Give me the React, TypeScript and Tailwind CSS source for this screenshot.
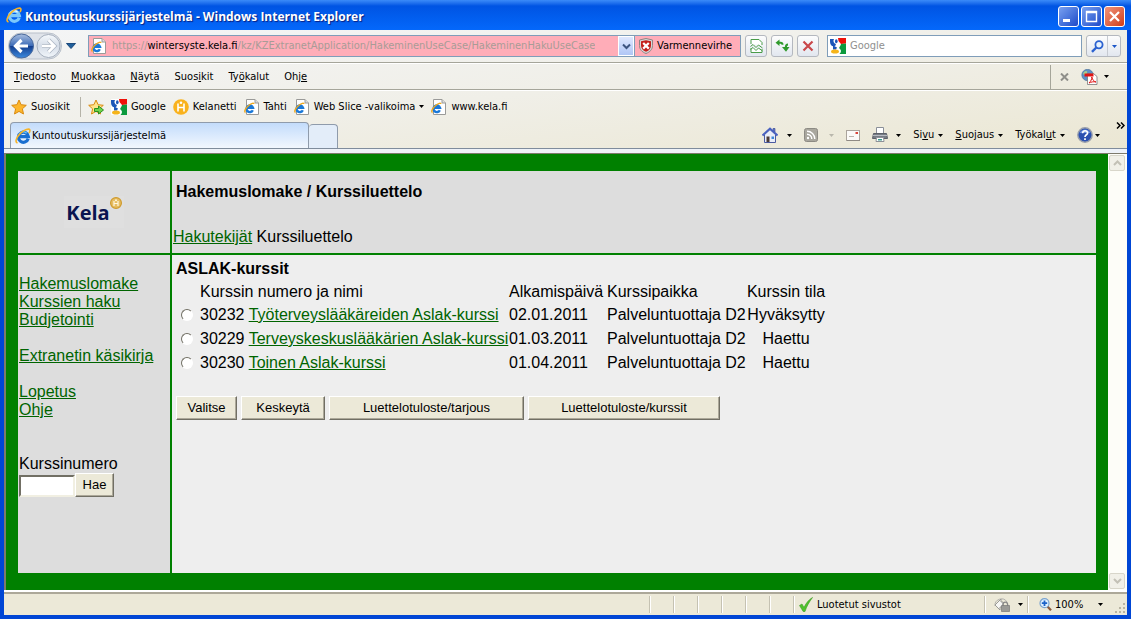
import type { ReactNode } from "react";

const LABEL = "font-['DejaVu_Sans_Condensed','DejaVu_Sans',sans-serif] text-[11px] leading-4 text-black";

function IeMark({ light = false }: { light?: boolean }) {
  return (
    <svg width="16" height="16" viewBox="0 0 16 16" className="shrink-0" aria-hidden="true">
      <path d="M13.200 10.800A5 5 0 1 1 13.400 8.600H4.600" fill="none" stroke={light ? "#7cc8fb" : "#1a6fd0"} strokeWidth="3.200" />
      <path d="M4 6.600a4.600 4.600 0 0 1 7.600-1.400" fill="none" stroke={light ? "#e6f6ff" : "#6cc4f5"} strokeWidth="1.300" />
      <path d="M2.600 14.800C-.6 14.400 1.600 9 5.600 5.200 9.400 1.700 14 .2 14.800 1.800c.4.800 0 2-.8 3.300" fill="none" stroke="#f6b42a" strokeWidth="1.600" />
    </svg>
  );
}

function IePage() {
  return (
    <svg width="16" height="16" viewBox="0 0 16 16" className="shrink-0" aria-hidden="true">
      <path d="M2.500.5h8.500l3.500 3.500v11.500h-12z" fill="#fff" stroke="#9a9a98" />
      <path d="M11 .5V4h3.500" fill="#ddd" stroke="#9a9a98" />
      <path d="M8.800 11.200A3.300 3.300 0 1 1 9 8.900H3" fill="none" stroke="#1a78d8" strokeWidth="2.400" />
      <path d="M1.500 13.500C-.5 12.500 2 8.500 5 6.200 7.500 4.300 9.800 3.600 10 5" fill="none" stroke="#f0a81c" strokeWidth="1.400" />
    </svg>
  );
}

function GoogleMark() {
  return (
    <svg width="16" height="16" viewBox="0 0 16 16" className="shrink-0" aria-hidden="true">
      <rect width="16" height="16" rx="1" fill="#fff" />
      <path d="M8 0h8v5.500l-5 .5-2.500-3z" fill="#ee1008" />
      <path d="M11 6l5-.5V16H9.500c2-2 2-4 0-5.500-1-1 1-2 1.500-4.500z" fill="#0c9a3e" />
      <path d="M0 1h4C2.800 3 3.500 5.500 6 6L5 8.500 2 8C.5 7 0 5 0 3z" fill="#1c56b8" />
      <path d="M3 7.500 7 9.500 6 11.500H3z" fill="#1c56b8" />
      <ellipse cx="6.300" cy="3.300" rx="1.300" ry="2" fill="#1c56b8" />
      <ellipse cx="5" cy="13.500" rx="4" ry="2.100" fill="#f5b41a" />
    </svg>
  );
}

function Star({ add = false }: { add?: boolean }) {
  return (
    <svg width="16" height="16" viewBox="0 0 16 16" className="shrink-0" aria-hidden="true">
      <path d="M8 1l2.100 4.700 5.200.6-3.900 3.500 1.100 5.200L8 12.400 3.500 15l1.100-5.200L.7 6.300l5.200-.6z" fill={add ? "#ffe48a" : "#fdb62c"} stroke="#d98a10" />
      {add && <path d="M6.500 9.500h4V7l5 4-5 4v-2.500h-4z" fill="#6fd44c" stroke="#2c8f1e" />}
    </svg>
  );
}

function KelaBadge() {
  return (
    <svg width="16" height="16" viewBox="0 0 16 16" className="shrink-0" aria-hidden="true">
      <circle cx="8" cy="8" r="7.800" fill="#f9b21d" />
      <circle cx="8" cy="3.800" r="1.300" fill="#fff" />
      <path d="M5 4.500v8M11 4.500v8M5 8.500h6" stroke="#fff" strokeWidth="1.600" fill="none" />
    </svg>
  );
}

function Caret({ className = "text-black" }: { className?: string }) {
  return (
    <svg width="5" height="3" viewBox="0 0 5 3" className={`shrink-0 ${className}`} aria-hidden="true">
      <path d="M0 0h5L2.500 3z" fill="currentColor" />
    </svg>
  );
}

function HomeIcon() {
  return (
    <svg width="16" height="16" viewBox="0 0 16 16" className="shrink-0" aria-hidden="true">
      <path d="M11 1.500h2V5h-2z" fill="#6d7fc4" stroke="#2b3e92" strokeWidth=".6" />
      <path d="M2.500 7.500 8 2.500l5.500 5v8h-11z" fill="#e9edf8" stroke="#4a5aa0" />
      <path d="M.5 8.500 8 1.500l7.500 7" fill="none" stroke="#4a62c0" strokeWidth="2" />
      <path d="M4.500 9.500h3V15h-3z" fill="#4a3a36" />
      <path d="M9.500 9.500h2.500V12H9.500z" fill="#3d86d8" />
    </svg>
  );
}

function FeedIcon() {
  return (
    <svg width="14" height="14" viewBox="0 0 14 14" className="shrink-0" aria-hidden="true">
      <rect x=".5" y=".5" width="13" height="13" rx="2" fill="#a9a79e" stroke="#8d8b84" />
      <circle cx="4" cy="10" r="1.200" fill="#fff" />
      <path d="M3 6.200A4.800 4.800 0 0 1 7.800 11M3 3.200A7.800 7.800 0 0 1 10.800 11" fill="none" stroke="#fff" strokeWidth="1.400" />
    </svg>
  );
}

function MailIcon() {
  return (
    <svg width="14" height="11" viewBox="0 0 14 11" className="shrink-0" aria-hidden="true">
      <rect x=".5" y=".5" width="13" height="10" fill="#fbfaf8" stroke="#aaa49c" />
      <path d="M9.500 2h2.500v2H9.500z" fill="#d8453a" />
      <path d="M3 6.500h5" stroke="#b9b4ac" />
      <path d="M1 10.500h13" stroke="#8f8a84" />
    </svg>
  );
}

function PrinterIcon() {
  return (
    <svg width="16" height="16" viewBox="0 0 16 16" className="shrink-0" aria-hidden="true">
      <path d="M4.500.5h7V7h-7z" fill="#fff" stroke="#8a8f98" />
      <path d="M1.500 6.500h13l1 5H.5z" fill="#777c85" stroke="#5c6068" />
      <path d="M1 8.500h14" stroke="#b7bbc2" />
      <path d="M4.500 10.500h7l.5 4H4z" fill="#fff" stroke="#8d9198" />
      <path d="M6 12h4v1.500H6z" fill="#3a9a8c" />
    </svg>
  );
}

function HelpIcon() {
  return (
    <svg width="16" height="16" viewBox="0 0 16 16" className="shrink-0" aria-hidden="true">
      <circle cx="8" cy="8" r="7.200" fill="#2b50b0" stroke="#9aa0ac" strokeWidth="1.400" />
      <path d="M2.500 6a6 6 0 0 1 11 0z" fill="#6d90dd" />
      <path d="M5.600 6.300c0-3.400 5-3.200 5-.4C10.600 7.800 8 7.700 8 10M8 11.200v1.800" fill="none" stroke="#fff" strokeWidth="1.700" />
    </svg>
  );
}

function PdfIcon() {
  return (
    <svg width="17" height="16" viewBox="0 0 17 16" className="shrink-0" aria-hidden="true">
      <circle cx="6.500" cy="6" r="5.700" fill="#5f90c4" stroke="#436a94" strokeWidth=".6" />
      <path d="M3 3c2-2 4-1 3 1S3 6 2 5z" fill="#a7d08b" />
      <path d="M6.500 4.500h6l3.500 3v8H6.500z" fill="#fff" stroke="#777" strokeWidth=".8" />
      <path d="M3.500 4.500h9v3h-9z" fill="#e01414" />
      <path d="M8 14c2-2 3-4 2.800-6 .8 3 2.200 4.500 4.200 5-2.500-.6-5 0-7 1z" fill="none" stroke="#e01414" />
    </svg>
  );
}

function Shield() {
  return (
    <svg width="14" height="16" viewBox="0 0 14 16" className="shrink-0" aria-hidden="true">
      <path d="M7 .5 13.500 2v5.500c0 4-2.500 6.500-6.500 8-4-1.500-6.500-4-6.500-8V2z" fill="#d8d8d8" stroke="#8f8583" />
      <path d="M7 2.200 12 3.300v4.200c0 3-1.800 5-5 6.300-3.200-1.300-5-3.300-5-6.300V3.300z" fill="#c4201c" />
      <path d="m4.200 5 5.600 5.600m0-5.600L4.200 10.600" stroke="#fff" strokeWidth="2.200" />
    </svg>
  );
}

function NavButtons() {
  return (
    <div className="relative flex h-7 w-[54px] shrink-0 items-center">
      <svg width="54" height="28" viewBox="0 0 54 28" className="absolute inset-0" aria-hidden="true">
        <defs>
          <linearGradient id="back" x2="0" y2="1">
            <stop offset="0" stopColor="#a9bedf" />
            <stop offset=".48" stopColor="#3f6db8" />
            <stop offset=".52" stopColor="#153f8f" />
            <stop offset="1" stopColor="#3c8be0" />
          </linearGradient>
          <linearGradient id="fwd" x2="0" y2="1">
            <stop offset="0" stopColor="#f6f9fc" />
            <stop offset=".5" stopColor="#d5dde8" />
            <stop offset="1" stopColor="#f2f6fa" />
          </linearGradient>
        </defs>
        <rect x=".5" y="1" width="53" height="26" rx="13" fill="#dfe3e9" stroke="#b9c0ca" />
        <circle cx="13.500" cy="14" r="12" fill="url(#back)" stroke="#4a6a9c" />
        <path d="M13.500 8 7.500 14l6 6M8 14h12" fill="none" stroke="#fff" strokeWidth="3.200" />
        <circle cx="40.500" cy="14" r="11.500" fill="url(#fwd)" stroke="#a4aebc" />
        <path d="m40.500 8 6 6-6 6M46 14H34" fill="none" stroke="#aab4c2" strokeWidth="4" />
        <path d="m40.500 8 6 6-6 6M46 14H34" fill="none" stroke="#fff" strokeWidth="2.600" />
      </svg>
      <button type="button" aria-label="Takaisin" className="relative h-7 w-[27px]" />
      <button type="button" aria-label="Eteenpäin" className="relative h-7 w-[27px]" />
    </div>
  );
}

function ToolButton({ label, children }: { label: string; children: ReactNode }) {
  return (
    <button
      type="button"
      aria-label={label}
      className="flex h-[22px] w-[22px] shrink-0 items-center justify-center rounded-[3px] border border-[#b4b8bf] bg-linear-to-b from-[#fdfdfd] to-[#e2e7ef]"
    >
      {children}
    </button>
  );
}

function TitleBar() {
  const base = "flex h-[21px] w-[21px] items-center justify-center rounded-[3px] border border-white";
  return (
    <header className="flex h-[30px] shrink-0 items-center gap-[3px] bg-linear-to-b from-[#3b8bf8] via-[#0054e3] via-20% to-[#0468fb] px-[6px]">
      <IeMark light />
      <h1 className="flex-1 truncate pt-1 font-['Open_Sans',sans-serif] text-[12px] leading-5 font-bold text-white [text-shadow:1px_1px_1px_#0a1f80]">
        Kuntoutuskurssijärjestelmä - Windows Internet Explorer
      </h1>
      <div className="flex shrink-0 gap-[2px] pt-[2px]">
        <button type="button" aria-label="Pienennä" className={`${base} bg-linear-to-br from-[#7aa0f0] to-[#1f48c8]`}>
          <svg width="13" height="13" viewBox="0 0 13 13"><path d="M1 9h7v3H1z" fill="#fff" /></svg>
        </button>
        <button type="button" aria-label="Suurenna" className={`${base} bg-linear-to-br from-[#7aa0f0] to-[#1f48c8]`}>
          <svg width="13" height="13" viewBox="0 0 13 13"><path d="M1.500 1.500h10v10h-10zM1 2.500h11" fill="none" stroke="#fff" strokeWidth="1.400" /></svg>
        </button>
        <button type="button" aria-label="Sulje" className={`${base} bg-linear-to-br from-[#f0937a] to-[#cf3a10]`}>
          <svg width="13" height="13" viewBox="0 0 13 13"><path d="m2 2 9 9m0-9-9 9" stroke="#fff" strokeWidth="2.200" /></svg>
        </button>
      </div>
    </header>
  );
}

function AddressRow() {
  return (
    <div className="flex h-[33px] items-center gap-1 border-b border-[#a5a59a] pr-[6px] pl-1">
      <NavButtons />
      <button type="button" aria-label="Viimeisimmät sivut" className="mr-2 flex h-5 w-[10px] shrink-0 items-center justify-center">
        <svg width="10" height="6" viewBox="0 0 10 6"><path d="M.5.5h9L5 5.500z" fill="#1f5f9c" stroke="#1d4a7c" /></svg>
      </button>
      <div className="flex h-[22px] min-w-0 flex-1 border border-[#7f9db9] bg-[#ffadb8]">
        <div className="flex min-w-0 flex-1 items-center gap-[5px] pl-[2px]">
          <IePage />
          <div role="textbox" aria-label="Osoite" tabIndex={0} className={`${LABEL} truncate`}>
            <span className="text-[#a89c96]">https://</span>wintersyste.kela.fi
            <span className="text-[#a89c96]">/kz/KZExtranetApplication/HakeminenUseCase/HakeminenHakuUseCase</span>
          </div>
        </div>
        <button type="button" aria-label="Näytä osoitteet" className="flex w-4 shrink-0 items-center justify-center border border-white bg-linear-to-b from-[#dfe8fe] to-[#b0c6f5]">
          <svg width="9" height="7" viewBox="0 0 9 7"><path d="m1 1.500 3.500 3.500L8 1.500" fill="none" stroke="#3d5580" strokeWidth="2" /></svg>
        </button>
        <button type="button" className={`${LABEL} flex w-[106px] shrink-0 items-center gap-1 border-l border-[#7f9db9] pl-1`}>
          <Shield />
          Varmennevirhe
        </button>
      </div>
      <ToolButton label="Yhteensopivuusnäkymä">
        <svg width="13" height="14" viewBox="0 0 13 14">
          <path d="M1 5V.5h8L12 3.500V6M1 9v4.500h11V10" fill="#fff" stroke="#4a9c48" />
          <path d="m.5 7.500 2.500-2 3 3 2.500-2.500 4 3M.5 10.500l2.500-2 3 3 2.500-2.500 4 3" fill="none" stroke="#4a9c48" />
        </svg>
      </ToolButton>
      <ToolButton label="Päivitä">
        <svg width="15" height="14" viewBox="0 0 15 14" fill="none">
          <path d="M4.500.5v6.500L.5 3.800z" fill="#2f9a2c" />
          <path d="M4 3.800h1.500q2 0 2 2" stroke="#2f9a2c" strokeWidth="2" />
          <path d="M7 8h7.500L11 12.800z" fill="#2f9a2c" />
          <path d="M10.800 8.500q0-3 2.200-3" stroke="#2f9a2c" strokeWidth="2" />
        </svg>
      </ToolButton>
      <ToolButton label="Pysäytä">
        <svg width="12" height="12" viewBox="0 0 12 12"><path d="m1.500 1.500 9 9m0-9-9 9" stroke="#c9474a" strokeWidth="2.200" /></svg>
      </ToolButton>
      <label className="ml-1 flex h-[22px] w-[255px] shrink-0 items-center gap-1 border border-[#7f9db9] bg-white pl-[2px]">
        <GoogleMark />
        <input aria-label="Haku" placeholder="Google" className={`${LABEL} min-w-0 flex-1 outline-none placeholder:text-[#8f8f8f]`} />
      </label>
      <div className="flex h-[22px] w-[35px] shrink-0 rounded-[3px] border border-[#b4b8bf] bg-linear-to-b from-[#fdfdfd] to-[#e2e7ef]">
        <button type="button" aria-label="Hae verkosta" className="flex flex-1 items-center justify-center">
          <svg width="13" height="13" viewBox="0 0 13 13"><circle cx="8" cy="4.800" r="3.600" fill="#e6f2ff" stroke="#2c62d0" strokeWidth="1.800" /><path d="M5.300 7.500 1 11.800" stroke="#2c62d0" strokeWidth="2.400" /></svg>
        </button>
        <button type="button" aria-label="Hakuasetukset" className="flex w-[13px] items-center justify-center border-l border-[#c6cad1]">
          <Caret className="text-[#1c56c8]" />
        </button>
      </div>
    </div>
  );
}

const menus: [string, string, string][] = [
  ["", "T", "iedosto"],
  ["", "M", "uokkaa"],
  ["", "N", "äytä"],
  ["Suos", "i", "kit"],
  ["Ty", "ö", "kalut"],
  ["Ohj", "e", ""],
];

function MenuRow() {
  return (
    <div className="flex h-[27px] items-center border-t border-b border-t-white border-b-[#a5a59a] pr-[18px] pl-[10px]">
      <nav className="flex flex-1 gap-[15px]">
        {menus.map(([a, k, b]) => (
          <button type="button" key={a + k + b} className={LABEL}>
            {a}<u>{k}</u>{b}
          </button>
        ))}
      </nav>
      <div className="flex h-6 items-center gap-3 border-l border-[#a5a59a] pl-[9px]">
        <button type="button" aria-label="Sulje työkalurivi">
          <svg width="9" height="8" viewBox="0 0 9 8"><path d="m1 .5 7 7m0-7-7 7" stroke="#8f8f8a" strokeWidth="2" /></svg>
        </button>
        <button type="button" aria-label="Muunna PDF-tiedostoksi" className="flex items-center gap-[6px]">
          <PdfIcon />
          <Caret />
        </button>
      </div>
    </div>
  );
}

function Fav({ icon, children, caret = false }: { icon: ReactNode; children?: ReactNode; caret?: boolean }) {
  return (
    <button type="button" className={`${LABEL} flex shrink-0 items-center gap-1 whitespace-nowrap`}>
      {icon}
      {children}
      {caret && <Caret />}
    </button>
  );
}

function FavoritesRow() {
  return (
    <div className="flex h-8 items-center gap-[7px] border-t border-white pl-[7px]">
      <Fav icon={<Star />}>Suosikit</Fav>
      <div className="ml-[3px] h-5 border-l border-[#b5b3a8]" />
      <button type="button" aria-label="Lisää suosikkeihin"><Star add /></button>
      <Fav icon={<GoogleMark />}>Google</Fav>
      <Fav icon={<KelaBadge />}>Kelanetti</Fav>
      <Fav icon={<IePage />}>Tahti</Fav>
      <Fav icon={<IePage />} caret>Web Slice -valikoima</Fav>
      <Fav icon={<IePage />}>www.kela.fi</Fav>
    </div>
  );
}

function TabRow() {
  const item = `${LABEL} flex items-center gap-1`;
  return (
    <div className="flex h-[27px] items-end border-b border-[#7f8c9c] pl-[6px]">
      <div role="tablist" className="flex items-end">
        <button role="tab" aria-selected="true" type="button" className={`${LABEL} flex h-[26px] w-[299px] items-center gap-px rounded-t border border-b-0 border-[#8f9bab] bg-linear-to-b from-[#c3dcfb] to-[#f2f7fe] pl-1`}>
          <IeMark />
          Kuntoutuskurssijärjestelmä
        </button>
        <button type="button" aria-label="Uusi välilehti" className="h-6 w-[29px] rounded-t border border-b-0 border-l-0 border-[#8f9bab] bg-[#e3edf9]" />
      </div>
      <div className="flex h-full flex-1 items-center justify-end gap-3 pr-[2px]">
        <button type="button" aria-label="Kotisivu" className={`${item} gap-[9px]`}><HomeIcon /><Caret /></button>
        <button type="button" aria-label="Syötteet" className={`${item} gap-[11px]`}><FeedIcon /><Caret className="text-[#b9b7ac]" /></button>
        <button type="button" aria-label="Sähköposti" className={item}><MailIcon /></button>
        <button type="button" aria-label="Tulosta" className={`${item} gap-2`}><PrinterIcon /><Caret /></button>
        <button type="button" className={item}><span>Si<u>v</u>u</span><Caret /></button>
        <button type="button" className={item}><span><u>S</u>uojaus</span><Caret /></button>
        <button type="button" className={item}><span>Työkal<u>u</u>t</span><Caret /></button>
        <button type="button" aria-label="Ohje" className={`${item} gap-[2px]`}><HelpIcon /><Caret /></button>
        <button type="button" aria-label="Lisää" className="ml-1 self-start">
          <svg width="9" height="7" viewBox="0 0 9 7"><path d="m1 .5 3 3-3 3M5 .5l3 3-3 3" fill="none" stroke="#000" strokeWidth="1.500" /></svg>
        </button>
      </div>
    </div>
  );
}

function FormButton({ className, children }: { className: string; children: ReactNode }) {
  return (
    <button
      type="button"
      className={`h-6 shrink-0 border border-t-white border-r-[#716f64] border-b-[#716f64] border-l-white bg-[#ece9d8] text-[13px] leading-4 shadow-[inset_-1px_-1px_0_#aca899] ${className}`}
    >
      {children}
    </button>
  );
}

const link = "text-[#006400] underline";

function KelaLogo() {
  return (
    <div className="flex h-8 w-[60px] items-start justify-center bg-[#dfdfdf]">
      <span className="pt-[3px] font-['Open_Sans',sans-serif] text-[20px] leading-7 font-bold text-[#0a1450]">Kela</span>
      <svg width="12" height="12" viewBox="0 0 12 12" className="mt-px shrink-0" aria-hidden="true">
        <circle cx="6" cy="6" r="5.400" fill="#e6bd62" stroke="#cf9a2c" strokeWidth="1.200" />
        <circle cx="6" cy="3.200" r="1" fill="#fff6dc" />
        <path d="M4 4v5M8 4v5M4 6.500h4" stroke="#fff6dc" strokeWidth="1.200" />
      </svg>
    </div>
  );
}

function Sidebar() {
  return (
    <aside className="bg-[#dddddd] px-px pt-5 leading-[18px]">
      <nav className="flex flex-col items-start">
        <a href="#hakemuslomake" className={link}>Hakemuslomake</a>
        <a href="#haku" className={link}>Kurssien haku</a>
        <a href="#budjetointi" className={link}>Budjetointi</a>
        <a href="#kasikirja" className={`${link} my-[18px]`}>Extranetin käsikirja</a>
        <a href="#lopetus" className={link}>Lopetus</a>
        <a href="#ohje" className={link}>Ohje</a>
      </nav>
      <form className="mt-9">
        <label htmlFor="kurssinumero" className="block">Kurssinumero</label>
        <div className="flex items-end">
          <input
            id="kurssinumero"
            className="h-[22px] w-14 border-2 border-t-[#716f64] border-r-[#f1efe2] border-b-[#f1efe2] border-l-[#716f64] bg-white px-1 text-[13px] outline-none"
          />
          <FormButton className="w-[39px]">Hae</FormButton>
        </div>
      </form>
    </aside>
  );
}

const courses = [
  { id: "30232", name: "Työterveyslääkäreiden Aslak-kurssi", date: "02.01.2011", place: "Palveluntuottaja D2", state: "Hyväksytty" },
  { id: "30229", name: "Terveyskeskuslääkärien Aslak-kurssi", date: "01.03.2011", place: "Palveluntuottaja D2", state: "Haettu" },
  { id: "30230", name: "Toinen Aslak-kurssi", date: "01.04.2011", place: "Palveluntuottaja D2", state: "Haettu" },
];

function CourseList() {
  return (
    <main className="bg-[#eeeeee] px-1 pt-[5px]">
      <h2 className="leading-[18px] font-bold">ASLAK-kurssit</h2>
      <table className="mt-[3px] leading-[18px] whitespace-nowrap">
        <thead>
          <tr className="h-[22px] text-left">
            <th className="w-6 p-0" aria-label="Valinta" />
            <th className="w-[309px] p-0 font-normal">Kurssin numero ja nimi</th>
            <th className="w-[98px] p-0 font-normal">Alkamispäivä</th>
            <th className="w-[139px] p-0 font-normal">Kurssipaikka</th>
            <th className="w-20 p-0 text-center font-normal">Kurssin tila</th>
          </tr>
        </thead>
        <tbody>
          {courses.map((c) => (
            <tr key={c.id} className="h-6">
              <td className="p-0 pb-px pl-[5px]">
                <input
                  type="radio"
                  name="kurssi"
                  aria-label={c.name}
                  className="block size-3 appearance-none rounded-full border border-t-[#716f64] border-r-white border-b-white border-l-[#716f64] bg-white checked:bg-black"
                />
              </td>
              <td className="p-0">{c.id} <a href={`#${c.id}`} className={link}>{c.name}</a></td>
              <td className="p-0">{c.date}</td>
              <td className="p-0">{c.place}</td>
              <td className="p-0 text-center">{c.state}</td>
            </tr>
          ))}
        </tbody>
      </table>
      <div className="mt-[21px] flex gap-1">
        <FormButton className="w-[61px]">Valitse</FormButton>
        <FormButton className="w-[84px]">Keskeytä</FormButton>
        <FormButton className="w-[195px]">Luettelotuloste/tarjous</FormButton>
        <FormButton className="w-[192px]">Luettelotuloste/kurssit</FormButton>
      </div>
    </main>
  );
}

function ScrollArrow({ down = false }: { down?: boolean }) {
  return (
    <button type="button" disabled aria-label={down ? "Vieritä alas" : "Vieritä ylös"} className="my-px flex h-4 items-center justify-center rounded-xs border border-[#d8d6ca] bg-[#f1f0e8]">
      <svg width="9" height="6" viewBox="0 0 9 6"><path d={down ? "m1 1 3.500 3.500L8 1" : "M1 5l3.500-3.500L8 5"} fill="none" stroke="#c3c1b6" strokeWidth="2" /></svg>
    </button>
  );
}

function Separator() {
  return <div className="h-[17px] shrink-0 border-r border-l border-r-white border-l-[#c5c2b2]" />;
}

function StatusBar() {
  return (
    <footer className={`${LABEL} flex h-[22px] shrink-0 items-center border-t border-[#aca899] bg-[#ece9d8]`}>
      <div className="flex-1" />
      <div className="flex gap-[22px]">
        {Array.from({ length: 7 }, (_, i) => <Separator key={i} />)}
      </div>
      <div className="ml-1 flex w-[185px] items-center gap-1">
        <svg width="14" height="15" viewBox="0 0 14 15" className="shrink-0"><path d="M.5 8.500 3 7l2 3.500C7 6 10 2.500 13.500.5 10.500 4.500 7.500 9.500 6 14.500H4.200z" fill="#4fc32c" stroke="#3a9c22" strokeWidth=".6" /></svg>
        Luotetut sivustot
      </div>
      <Separator />
      <button type="button" aria-label="Suojattu tila" className="flex w-[41px] items-center gap-2 pl-2">
        <svg width="16" height="14" viewBox="0 0 16 14">
          <path d="M1 8a6.500 6.500 0 0 1 12-4" fill="none" stroke="#b0b0ac" />
          <path d="M7 1 1 7l5 5V9h3V4H7z" fill="#f6f6f4" stroke="#9a9a96" />
          <path d="M9 8V6.500a2.300 2.300 0 0 1 4.600 0V8" fill="none" stroke="#888" strokeWidth="1.300" />
          <path d="M7.500 7.500h8v6h-8z" fill="#9a9a96" stroke="#777" strokeWidth=".7" />
        </svg>
        <Caret />
      </button>
      <Separator />
      <button type="button" className="flex items-center gap-[3px] pl-[10px]">
        <svg width="13" height="13" viewBox="0 0 13 13">
          <path d="m8 8 4 4.300" stroke="#8a5a3c" strokeWidth="2.200" />
          <circle cx="5.500" cy="5.200" r="4.500" fill="#dff0ff" stroke="#7aa3cf" strokeWidth="1.200" />
          <path d="M5.500 2.500v5.400M2.800 5.200h5.400" stroke="#1a62c8" strokeWidth="1.800" />
        </svg>
        <span className="w-10 text-left">100%</span>
        <Caret />
      </button>
      <svg width="12" height="12" viewBox="0 0 12 12" className="ml-3 shrink-0 self-end" fill="#b8b4a2" aria-hidden="true">
        <path d="M8 0h2v2H8zM4 4h2v2H4zM8 4h2v2H8zM0 8h2v2H0zM4 8h2v2H4zM8 8h2v2H8z" />
      </svg>
    </footer>
  );
}

export default function App() {
  return (
    <div className="flex min-h-screen flex-col bg-[#0046d5] font-['Liberation_Sans',Arial,sans-serif] text-[16px] text-black">
      <TitleBar />
      <div className="mx-1 mb-1 flex flex-1 flex-col bg-[#eeeddf]">
        <div className="bg-linear-to-br from-[#f4f5f6] via-[#f0efe8] to-[#ebe7d3]">
          <AddressRow />
          <MenuRow />
          <FavoritesRow />
          <TabRow />
        </div>
        <div className="flex flex-1 border-t-4 border-[#eef2f8]">
          <div className="flex flex-1 border-t border-l-2 border-[#7d7a6c] bg-[#fefefb]">
            <div className="grid flex-1 grid-cols-[152px_minmax(0,1fr)] grid-rows-[82px_minmax(0,1fr)] gap-[2px] border-x-12 border-y-17 border-[#008000] bg-[#008000]">
              <div className="flex items-center justify-center bg-[#dddddd]">
                <KelaLogo />
              </div>
              <div className="flex flex-col justify-between bg-[#dddddd] px-px pt-3 pb-[7px] leading-[18px]">
                <h2 className="pl-[3px] font-bold">Hakemuslomake / Kurssiluettelo</h2>
                <p><a href="#hakutekijat" className={link}>Hakutekijät</a> Kurssiluettelo</p>
              </div>
              <Sidebar />
              <CourseList />
            </div>
            <div className="flex w-[19px] shrink-0 flex-col justify-between bg-[#fdfdf8] pr-[2px] pl-px">
              <ScrollArrow />
              <ScrollArrow down />
            </div>
          </div>
        </div>
        <div className="h-[3px] border-b border-[#aca899] bg-white" />
        <StatusBar />
      </div>
    </div>
  );
}
